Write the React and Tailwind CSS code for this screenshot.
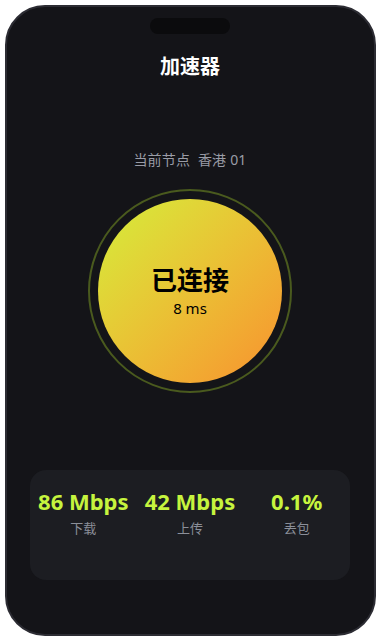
import React from 'react';

const stats = [
  { value: '86 Mbps', label: '下载' },
  { value: '42 Mbps', label: '上传' },
  { value: '0.1%', label: '丢包' },
];

const App = () => {
  return (
    <div
      className="w-[380px] h-[640px] bg-white pt-[5px]"
      style={{ fontFamily: '"Noto Sans", "Noto Sans CJK SC", sans-serif' }}
    >
      <div className="mx-auto w-[371px] h-[631px] rounded-[40px] border-2 border-[#2c2c33] bg-[#141418] flex flex-col items-center">
        {/* Notch */}
        <div className="mt-[11px] w-20 h-4 rounded-full bg-[#0b0b0d]" />

        {/* Title */}
        <h1 className="mt-[19px] text-xl leading-7 font-bold text-white">加速器</h1>

        {/* Node */}
        <div className="mt-[69px] text-sm leading-5 text-[#9a9ca6] tracking-[0.2px]">
          当前节点&nbsp;&nbsp;香港 01
        </div>

        {/* Connect button */}
        <div className="mt-[19px] w-[204px] h-[204px] rounded-full border-2 border-[#4a5a1e] p-2">
          <div className="w-full h-full rounded-full bg-gradient-to-br from-[#d2ee3a] to-[#f7902f] flex flex-col items-center justify-center">
            <div className="text-[26px] leading-8 font-bold text-black">已连接</div>
            <div className="mt-[2px] text-[15px] leading-5 text-black">8 ms</div>
          </div>
        </div>

        {/* Stats */}
        <div className="mt-[77px] w-[320px] h-[110px] rounded-2xl bg-[#1c1d22] grid grid-cols-3 pt-[17px] content-start">
          {stats.map((s) => (
            <div key={s.label} className="flex flex-col items-center">
              <div className="text-[22px] leading-7 font-bold text-[#c6f43e] whitespace-nowrap">{s.value}</div>
              <div className="mt-1 text-[13px] leading-[18px] text-[#8b8f99]">{s.label}</div>
            </div>
          ))}
        </div>
      </div>
    </div>
  );
};

export default App;
